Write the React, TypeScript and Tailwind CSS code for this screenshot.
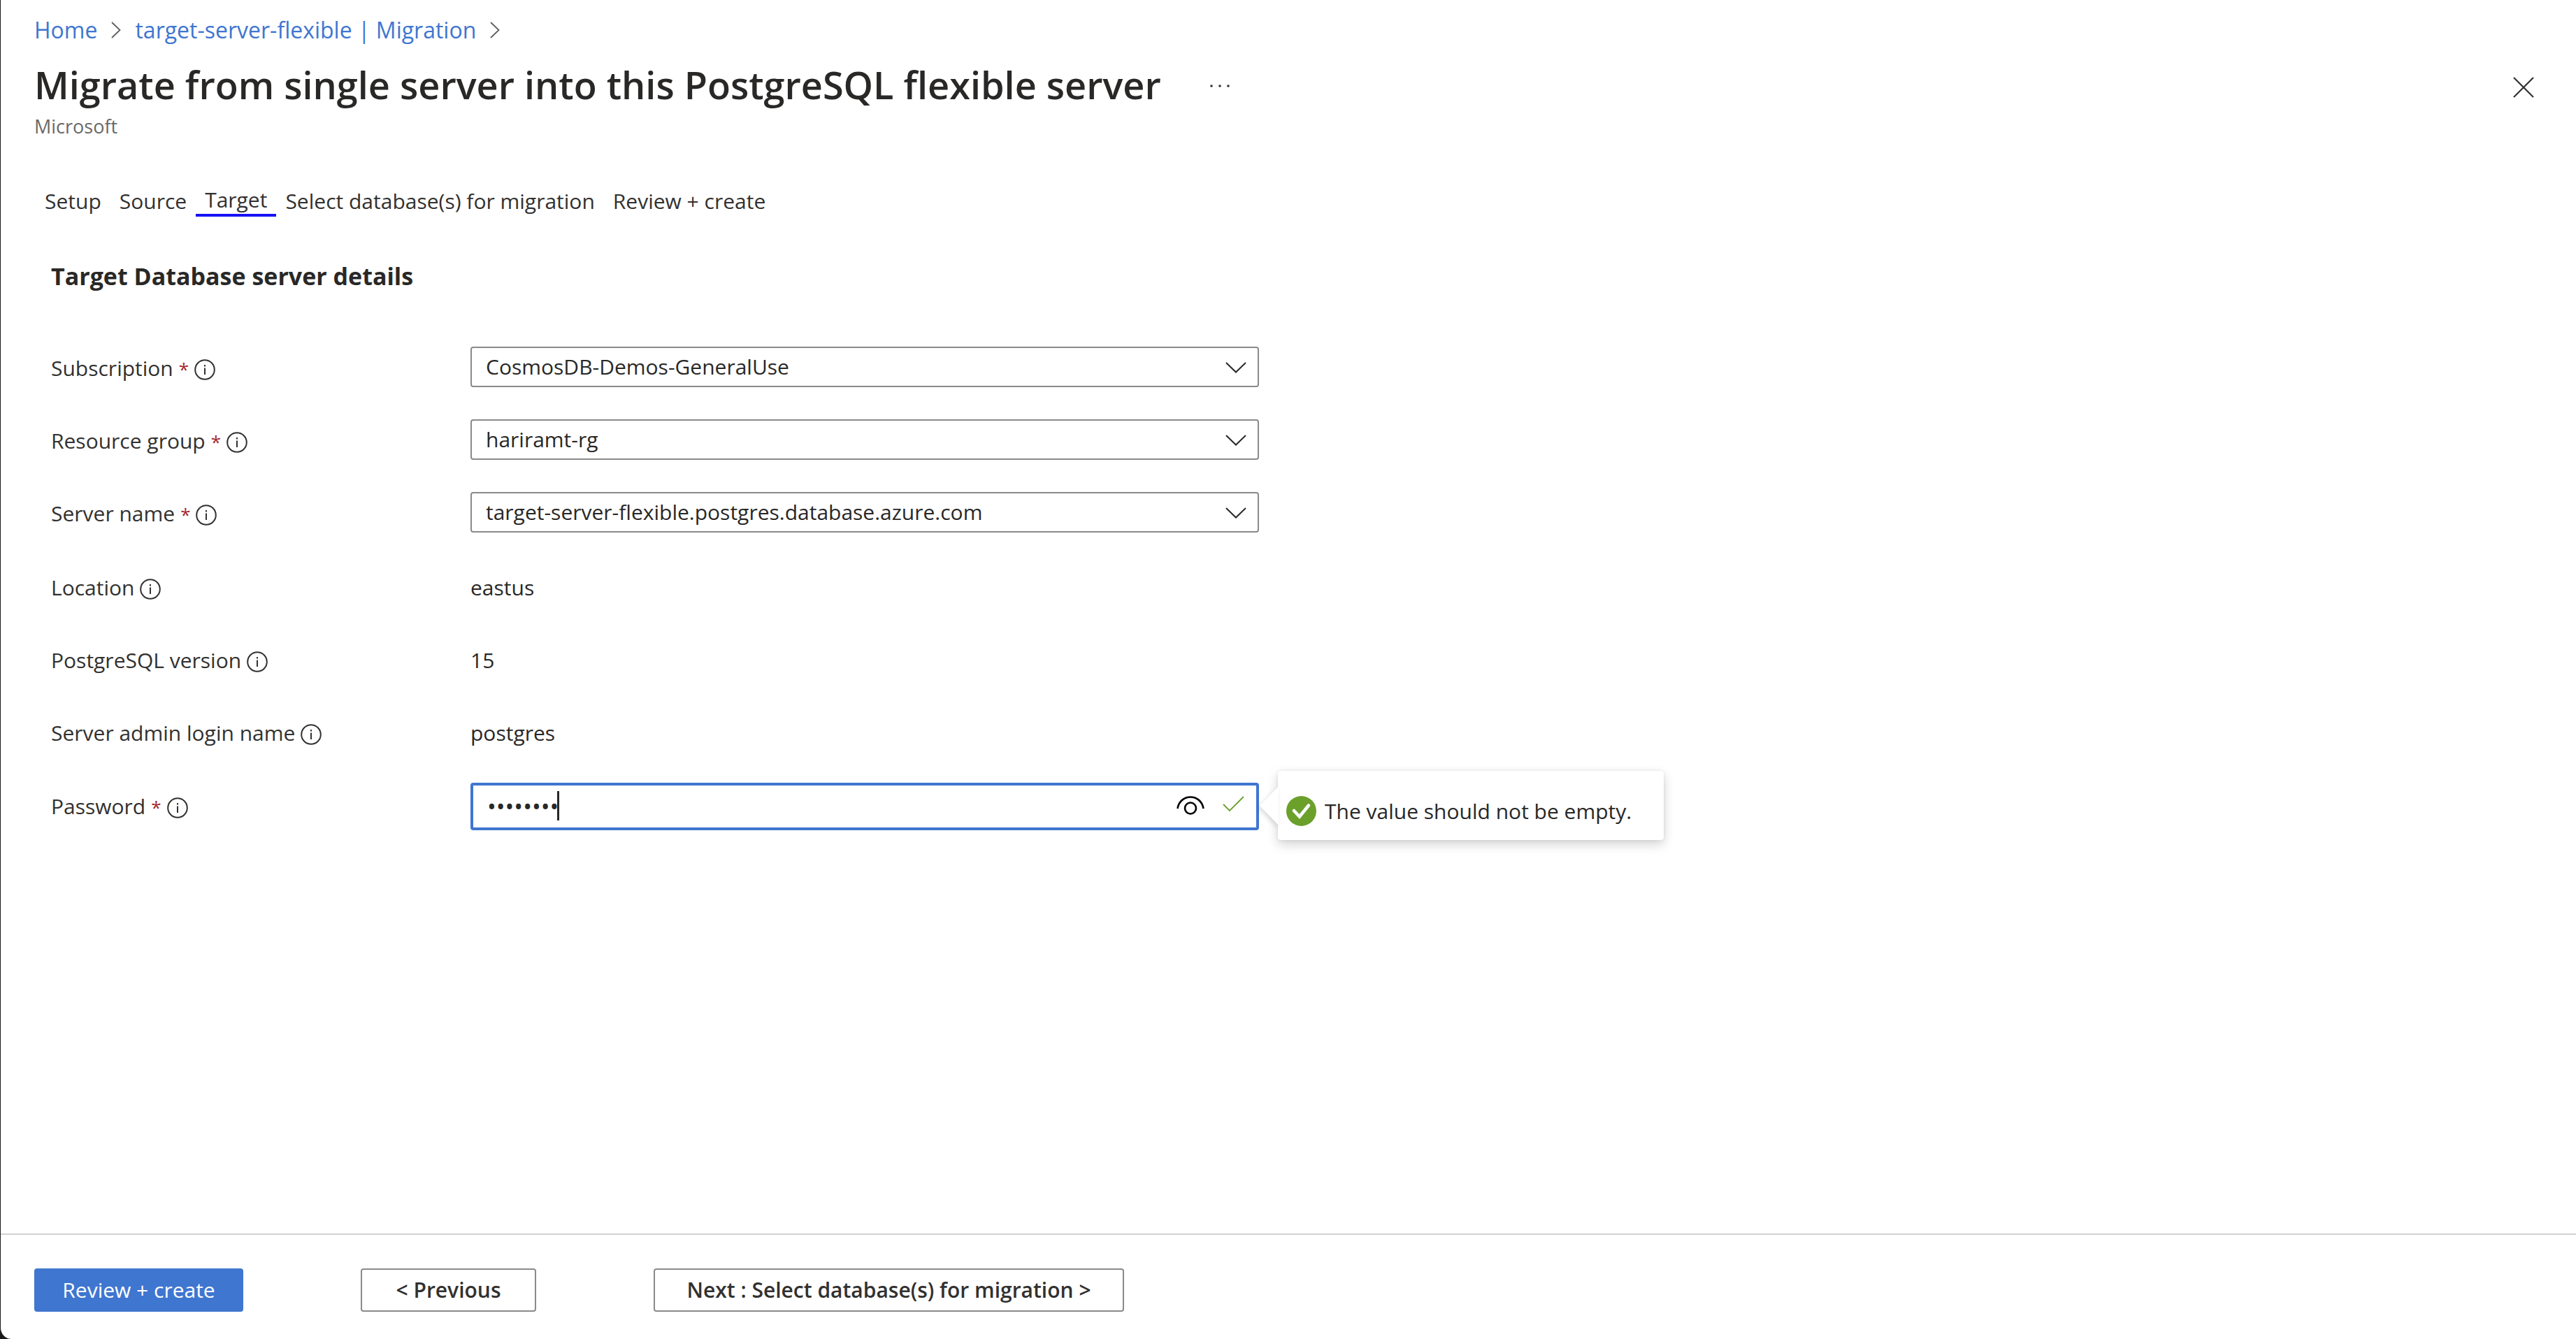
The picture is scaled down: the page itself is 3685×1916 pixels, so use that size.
import type { ReactNode } from "react";

function CrumbChevron() {
  return (
    <svg className="h-6 w-[14px] shrink-0" viewBox="0 0 14 24" fill="none" stroke="#605e5c" strokeWidth="1.8" aria-hidden="true">
      <path d="M1 1 L12.5 12 L1 23" />
    </svg>
  );
}

function InfoIcon() {
  return (
    <svg className="mt-1 size-[30px] shrink-0" viewBox="0 0 30 30" fill="none" aria-hidden="true">
      <circle cx="15" cy="15" r="13.8" stroke="#323130" strokeWidth="2" />
      <rect x="14" y="12.5" width="2" height="9.5" fill="#323130" />
      <rect x="14" y="8" width="2" height="2.5" fill="#323130" />
    </svg>
  );
}

function Label({ id, text, required }: { id?: string; text: string; required?: boolean }) {
  return (
    <div className="flex w-[600px] shrink-0 items-center gap-2">
      <label htmlFor={id}>
        {text}
        {required && <span className="ml-2 text-[26px] text-[#a4262c]">*</span>}
      </label>
      <InfoIcon />
    </div>
  );
}

function SelectRow({ id, label, value }: { id: string; label: string; value: string }) {
  return (
    <div className="flex h-[58px] items-center">
      <div className="pt-1">
        <Label id={id} text={label} required />
      </div>
      <div className="relative w-[1128px]">
        <select
          id={id}
          className="block h-[58px] w-full appearance-none rounded-[4px] border-2 border-[#8a8a8a] bg-white pr-20 pl-5 text-[30px] leading-10 text-[#292827] outline-none"
        >
          <option>{value}</option>
        </select>
        <svg
          className="pointer-events-none absolute top-[22px] right-[18px] h-4 w-[30px]"
          viewBox="0 0 30 16"
          fill="none"
          stroke="#292827"
          strokeWidth="2"
          aria-hidden="true"
        >
          <path d="M1 1 L15 14.5 L29 1" />
        </svg>
      </div>
    </div>
  );
}

function StaticRow({ label, children }: { label: string; children: ReactNode }) {
  return (
    <div className="flex h-[58px] items-center pt-2">
      <Label text={label} />
      <p className="text-[#292827]">{children}</p>
    </div>
  );
}

const tabs = ["Setup", "Source", "Target", "Select database(s) for migration", "Review + create"];

export default function App() {
  return (
    <div className="min-h-screen bg-[#1b1a19]">
      <div className="flex min-h-screen flex-col rounded-bl-[16px] border-l border-[#1b1a19] bg-white font-['Open_Sans','Noto_Sans',sans-serif] text-[30px] leading-10 text-[#323130]">
        <header className="pt-[23px] pr-[60px] pl-12">
          <nav aria-label="Breadcrumb" className="flex items-center gap-5 text-[32px] text-[#3f76d0]">
            <a href="#home">Home</a>
            <CrumbChevron />
            <a href="#migration">target-server-flexible | Migration</a>
            <CrumbChevron />
          </nav>
          <div className="mt-[22px] flex items-center">
            <h1 className="text-[54px] leading-[72px] font-semibold text-[#292827]">
              Migrate from single server into this PostgreSQL flexible server
            </h1>
            <button type="button" aria-label="More options" className="ml-16 flex h-10 w-10 items-center justify-center pt-1">
              <svg className="h-1 w-7" viewBox="0 0 28 4" fill="#323130" aria-hidden="true">
                <circle cx="2" cy="2" r="1.8" />
                <circle cx="14" cy="2" r="1.8" />
                <circle cx="26" cy="2" r="1.8" />
              </svg>
            </button>
            <button type="button" aria-label="Close" className="ml-auto pt-2">
              <svg className="size-[30px]" viewBox="0 0 30 30" stroke="#323130" strokeWidth="2.2" aria-hidden="true">
                <path d="M1 1 L29 29 M29 1 L1 29" />
              </svg>
            </button>
          </div>
          <p className="mt-[6px] text-[27px] leading-9 text-[#6b6967]">Microsoft</p>
        </header>

        <main className="flex-1 pl-12">
          <div role="tablist" className="mt-[67px] flex items-center pl-[2px]">
            {tabs.map((tab) => (
              <button
                key={tab}
                type="button"
                role="tab"
                aria-selected={tab === "Target"}
                className={tab === "Target" ? "border-b-4 border-[#1611f5] px-[13px]" : "px-[13px]"}
              >
                {tab}
              </button>
            ))}
          </div>

          <h2 className="mt-[61px] pl-6 text-[34px] leading-[48px] font-bold text-[#292827]">Target Database server details</h2>

          <form className="mt-[77px] flex flex-col gap-[46px] pl-6">
            <SelectRow id="subscription" label="Subscription" value="CosmosDB-Demos-GeneralUse" />
            <SelectRow id="resource-group" label="Resource group" value="hariramt-rg" />
            <SelectRow id="server-name" label="Server name" value="target-server-flexible.postgres.database.azure.com" />
            <StaticRow label="Location">eastus</StaticRow>
            <StaticRow label="PostgreSQL version">15</StaticRow>
            <StaticRow label="Server admin login name">postgres</StaticRow>
            <div className="flex h-[68px] items-center">
              <Label id="password" text="Password" required />
              <div className="relative w-[1128px]">
                <input
                  id="password"
                  type="password"
                  defaultValue="password"
                  className="block h-[68px] w-full rounded-[4px] border-4 border-[#3f76d0] bg-white pr-32 pl-5 text-[34px] text-[#292827] caret-transparent outline-none"
                />
                <span className="absolute top-3 left-[124px] h-[42px] w-[3px] bg-[#292827]" />
                <button type="button" aria-label="Show password" className="absolute top-[19px] right-[78px]">
                  <svg className="h-7 w-10" viewBox="0 0 40 28" fill="none" stroke="#000" strokeWidth="2.6" aria-hidden="true">
                    <path d="M1.5 18 C5 -4 35 -4 38.5 18" />
                    <circle cx="20" cy="17.5" r="8" />
                  </svg>
                </button>
                <svg
                  className="absolute top-[19px] right-[21px] h-6 w-[31px]"
                  viewBox="0 0 31 24"
                  fill="none"
                  stroke="#6ba02b"
                  strokeWidth="1.8"
                  aria-hidden="true"
                >
                  <path d="M1 12 L10 21 L30 1" />
                </svg>
                <div
                  role="status"
                  className="absolute -top-[17px] left-[1155px] flex h-[99px] w-[552px] items-center gap-3 rounded-[4px] bg-white pl-3 whitespace-nowrap text-[#292827] shadow-[0_6px_16px_rgba(0,0,0,0.18),0_0_4px_rgba(0,0,0,0.08)]"
                >
                  <svg
                    className="absolute top-[22px] -left-[27px] h-14 w-7 drop-shadow-[-2px_3px_3px_rgba(0,0,0,0.14)]"
                    viewBox="0 0 28 56"
                    aria-hidden="true"
                  >
                    <path d="M28 0 L1 28 L28 56 Z" fill="#fff" />
                  </svg>
                  <svg className="mt-4 size-[43px] shrink-0" viewBox="0 0 43 43" aria-hidden="true">
                    <circle cx="21.5" cy="21.5" r="21.5" fill="#6ba02b" />
                    <path d="M11 21 L19 29.5 L32 13.5" fill="none" stroke="#fff" strokeWidth="4.6" strokeLinecap="round" />
                  </svg>
                  <span className="mt-4">The value should not be empty.</span>
                </div>
              </div>
            </div>
          </form>
        </main>

        <footer className="flex items-center border-t-2 border-[#d2d2d2] pt-12 pb-[39px] pl-12">
          <button type="button" className="h-[62px] w-[299px] rounded-[4px] bg-[#3f76d0] text-white">
            Review + create
          </button>
          <button type="button" className="ml-[168px] h-[62px] w-[251px] rounded-[4px] border-2 border-[#8a8a8a] bg-white font-semibold">
            &lt; Previous
          </button>
          <button type="button" className="ml-[168px] h-[62px] w-[673px] rounded-[4px] border-2 border-[#8a8a8a] bg-white font-semibold">
            Next : Select database(s) for migration &gt;
          </button>
        </footer>
      </div>
    </div>
  );
}
